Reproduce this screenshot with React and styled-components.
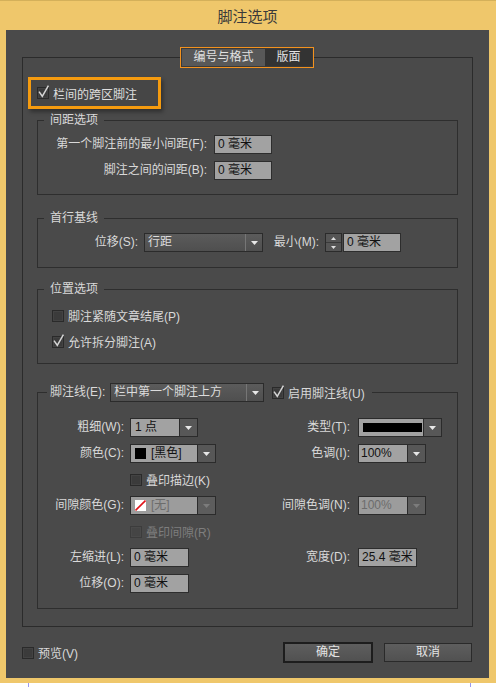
import React from 'react';
import styled, { createGlobalStyle } from 'styled-components';

const Global = createGlobalStyle`
  html, body { margin: 0; padding: 0; background: #ffffff; }
  body {
    font-family: "Liberation Sans", "Noto Sans CJK SC", sans-serif;
    font-size: 12px;
  }
  * { box-sizing: border-box; }
`;

const Window = styled.div`
  width: 496px;
  height: 683px;
  background: #efc76b;
  border-top: 1px solid #d4b05a;
  display: flex;
  flex-direction: column;
`;

const TitleBar = styled.div`
  height: 29px;
  display: flex;
  align-items: center;
  justify-content: center;
  font-family: "Noto Sans CJK SC", sans-serif;
  font-size: 15px;
  color: #3a3a3a;
  padding-right: 1px;
`;

const Panel = styled.div`
  margin: 0 7px 0 6px;
  background: #4a4a4a;
  padding: 17px 16px 15px 16px;
  color: #d9d9d9;
`;

const PageBehind = styled.div`
  height: 4px;
  margin: 0 25px 0 28px;
  border-left: 1px solid #9a9af0;
  border-right: 1px solid #9a9af0;
`;

const Fieldset = styled.fieldset`
  margin: 0;
  padding: 0;
  min-width: 0;
  border: 1px solid #2e2e2e;
`;

const OuterGroup = styled(Fieldset)`
  padding-bottom: 17px;
  border-color: #2b2b2b;
`;

const TabLegend = styled.legend`
  margin-left: 157px;
  padding: 1px;
  border: 1px solid #f3921e;
  background: #3a3a3a;
`;

const Tabs = styled.div`
  display: flex;
`;

const Tab = styled.div`
  width: ${p => p.$w}px;
  height: 17px;
  line-height: 17px;
  text-align: center;
  background: ${p => (p.$active ? '#333333' : '#585858')};
  color: #e2e2e2;
`;

const Highlight = styled.div`
  margin: 9px 0 0 5px;
  width: 133px;
  height: 32px;
  border: 3px solid #f59b0f;
  display: flex;
  align-items: center;
  gap: 4px;
  padding-left: 6px;
  background: #464646;
  box-shadow: 2px 3px 4px rgba(0, 0, 0, 0.35);
  color: #dedede;
`;

const Group = styled(Fieldset)`
  margin: ${p => p.$mt}px 14px 0;
  padding-top: ${p => p.$pt}px;
  padding-bottom: ${p => p.$pb}px;
`;

const GroupLegend = styled.legend`
  margin-left: 6px;
  padding: 0 6px;
  height: 15px;
  line-height: 15px;
  color: #d9d9d9;
`;

const SpacingGrid = styled.div`
  display: grid;
  grid-template-columns: 169px 58px;
  column-gap: 7px;
  row-gap: 7px;
  grid-auto-rows: 19px;
  align-items: center;
`;

const Label = styled.span`
  white-space: nowrap;
  text-align: right;
  line-height: 19px;
  color: ${p => (p.$disabled ? '#7e7e7e' : '#d9d9d9')};
  width: ${p => (p.$w ? `${p.$w}px` : 'auto')};
  flex-shrink: 0;
  padding-right: ${p => p.$pr || 0}px;
`;

const BaselineRow = styled.div`
  display: flex;
  align-items: center;
  height: 19px;
`;

const OptionList = styled.div`
  display: flex;
  flex-direction: column;
  gap: 7px;
  padding-left: 14px;
`;

const CheckRow = styled.div`
  display: flex;
  align-items: center;
  gap: 4px;
  height: 19px;
  white-space: nowrap;
  margin-left: ${p => p.$ml || 0}px;
  color: ${p => (p.$disabled ? '#7e7e7e' : '#d9d9d9')};
  grid-column: ${p => p.$span || 'auto'};
`;

const LineLegend = styled.legend`
  margin-left: 9px;
  padding: 0 7px 0 3px;
  height: 19px;
`;

const LegendInner = styled.div`
  display: flex;
  align-items: center;
  height: 19px;
`;

const FormGrid = styled.div`
  display: grid;
  grid-template-columns: 86px 134px 82px 1fr;
  column-gap: 6px;
  row-gap: 7px;
  grid-auto-rows: 19px;
  align-items: center;
`;

const TextField = styled.div`
  width: ${p => p.$w}px;
  height: 19px;
  background: #a2a2a2;
  border: 1px solid #2d2d2d;
  color: #111111;
  padding-left: 3px;
  line-height: 17px;
  white-space: nowrap;
  flex-shrink: 0;
  margin-left: ${p => p.$ml || 0}px;
`;

const SelectBox = styled.div`
  width: ${p => p.$w}px;
  height: 19px;
  display: flex;
  border: 1px solid #2b2b2b;
  flex-shrink: 0;
  margin-left: ${p => p.$ml || 0}px;
  background: ${p =>
    p.$dark ? 'linear-gradient(#5b5b5b, #4f4f4f)' : p.$disabled ? '#9c9c9c' : '#a2a2a2'};
`;

const SelectValue = styled.div`
  flex: 1;
  display: flex;
  align-items: center;
  gap: 5px;
  padding-left: ${p => p.$pl}px;
  line-height: 17px;
  white-space: nowrap;
  overflow: hidden;
  color: ${p => (p.$dark ? '#dcdcdc' : p.$disabled ? '#6c6c6c' : '#111111')};
`;

const SelectButton = styled.div`
  width: ${p => p.$w}px;
  display: flex;
  align-items: center;
  justify-content: center;
  background: ${p => (p.$dark ? 'transparent' : p.$disabled ? '#5d5d5d' : '#575757')};
  border-left: 1px solid ${p => (p.$dark ? '#767676' : '#2b2b2b')};
`;

const Swatch = styled.div`
  width: 11px;
  height: 11px;
  background: #000;
  flex-shrink: 0;
`;

const StrokeSwatch = styled.div`
  width: 59px;
  height: 9px;
  background: #000;
  margin-left: 4px;
`;

const Spinner = styled.div`
  width: 17px;
  height: 19px;
  margin-left: 6px;
  border: 1px solid #2b2b2b;
  background: #555555;
  display: flex;
  flex-direction: column;
  flex-shrink: 0;
`;

const SpinHalf = styled.div`
  flex: 1;
  display: flex;
  align-items: center;
  justify-content: center;
  border-top: ${p => (p.$bottom ? '1px solid #3a3a3a' : 'none')};
`;

const CheckSvg = styled.svg`
  display: block;
  overflow: visible;
  flex-shrink: 0;
`;

const FooterRow = styled.div`
  margin-top: 15px;
  height: 21px;
  display: flex;
  align-items: center;
  padding-right: 1px;
`;

const Buttons = styled.div`
  margin-left: auto;
  display: flex;
  align-items: center;
  gap: 11px;
`;

const Button = styled.button`
  width: ${p => (p.$primary ? 90 : 88)}px;
  height: ${p => (p.$primary ? 21 : 19)}px;
  border: ${p => (p.$primary ? '2px solid #1d1d1d' : '1px solid #2a2a2a')};
  background: linear-gradient(#5e5e5e, #515151);
  color: #e4e4e4;
  font: inherit;
  font-size: 12px;
  padding: 0;
  line-height: 15px;
`;

const Arrow = ({ color = '#e8e8e8', up }) => (
  <svg width="7" height="4" viewBox="0 0 7 4" style={{ display: 'block' }}>
    <path d={up ? 'M0 4H7L3.5 0Z' : 'M0 0H7L3.5 4Z'} fill={color} />
  </svg>
);

const SmallArrow = ({ up }) => (
  <svg width="5" height="3" viewBox="0 0 5 3" style={{ display: 'block' }}>
    <path d={up ? 'M0 3H5L2.5 0Z' : 'M0 0H5L2.5 3Z'} fill="#e0e0e0" />
  </svg>
);

const CheckBox = ({ checked, disabled }) => (
  <CheckSvg width="12" height="12" viewBox="0 0 12 12">
    <rect x="0.5" y="0.5" width="11" height="11" fill={disabled ? '#454545' : '#3b3b3b'} stroke={disabled ? '#3c3c3c' : '#2a2a2a'} />
    <rect x="1.5" y="1.5" width="9" height="9" fill="none" stroke={disabled ? '#4a4a4a' : '#434343'} />
    {checked && (
      <path d="M2 4.6 L5.3 9.3 L11.4 -1.4" fill="none" stroke="#d4d4d4" strokeWidth="1.5" />
    )}
  </CheckSvg>
);

const NoneSwatch = () => (
  <svg width="11" height="11" viewBox="0 0 11 11" style={{ display: 'block', flexShrink: 0 }}>
    <rect x="0" y="0" width="11" height="11" fill="#ffffff" />
    <path d="M0.5 10.5 L10.5 0.5" stroke="#e0141b" strokeWidth="1.6" />
  </svg>
);

const Select = ({ w, dark, disabled, btn = 17, pl = 3, children, ml }) => (
  <SelectBox $w={w} $dark={dark} $disabled={disabled} $ml={ml}>
    <SelectValue $dark={dark} $disabled={disabled} $pl={pl}>{children}</SelectValue>
    <SelectButton $w={btn} $dark={dark} $disabled={disabled}>
      <Arrow color={disabled ? '#7c7c7c' : '#e8e8e8'} />
    </SelectButton>
  </SelectBox>
);

export default function App() {
  return (
    <>
      <Global />
      <Window>
        <TitleBar>脚注选项</TitleBar>
        <Panel>
          <OuterGroup>
            <TabLegend>
              <Tabs>
                <Tab $w={83}>编号与格式</Tab>
                <Tab $w={47} $active>版面</Tab>
              </Tabs>
            </TabLegend>

            <Highlight>
              <CheckBox checked />
              栏间的跨区脚注
            </Highlight>

            <Group $mt={4} $pt={7} $pb={14}>
              <GroupLegend>间距选项</GroupLegend>
              <SpacingGrid>
                <Label>第一个脚注前的最小间距(F):</Label>
                <TextField $w={58}>0 毫米</TextField>
                <Label>脚注之间的间距(B):</Label>
                <TextField $w={58}>0 毫米</TextField>
              </SpacingGrid>
            </Group>

            <Group $mt={16} $pt={7} $pb={15}>
              <GroupLegend>首行基线</GroupLegend>
              <BaselineRow>
                <Label $w={100}>位移(S):</Label>
                <Select w={119} dark ml={6}>行距</Select>
                <Label $w={56}>最小(M):</Label>
                <Spinner>
                  <SpinHalf><SmallArrow up /></SpinHalf>
                  <SpinHalf $bottom><SmallArrow /></SpinHalf>
                </Spinner>
                <TextField $w={58} $ml={1}>0 毫米</TextField>
              </BaselineRow>
            </Group>

            <Group $mt={14} $pt={9} $pb={12}>
              <GroupLegend>位置选项</GroupLegend>
              <OptionList>
                <CheckRow>
                  <CheckBox />
                  脚注紧随文章结尾(P)
                </CheckRow>
                <CheckRow>
                  <CheckBox checked />
                  允许拆分脚注(A)
                </CheckRow>
              </OptionList>
            </Group>

            <Group $mt={19} $pt={16} $pb={15}>
              <LineLegend>
                <LegendInner>
                  <Label $w={56} style={{ textAlign: 'left' }}>脚注线(E):</Label>
                  <Select w={154} dark ml={4}>栏中第一个脚注上方</Select>
                  <CheckRow $ml={8}>
                    <CheckBox checked />
                    启用脚注线(U)
                  </CheckRow>
                </LegendInner>
              </LineLegend>
              <FormGrid>
                <Label>粗细(W):</Label>
                <Select w={68} btn={18} pl={4}>1 点</Select>
                <Label $pr={2}>类型(T):</Label>
                <Select w={84} btn={18} pl={0}><StrokeSwatch /></Select>

                <Label>颜色(C):</Label>
                <Select w={86} btn={18} pl={4}><Swatch />[黑色]</Select>
                <Label $pr={2}>色调(I):</Label>
                <Select w={68} btn={18} pl={2}>100%</Select>

                <CheckRow $span="2 / -1">
                  <CheckBox />
                  叠印描边(K)
                </CheckRow>

                <Label>间隙颜色(G):</Label>
                <Select w={86} btn={18} pl={4} disabled><NoneSwatch />[无]</Select>
                <Label $pr={2}>间隙色调(N):</Label>
                <Select w={68} btn={18} pl={2} disabled>100%</Select>

                <CheckRow $span="2 / -1" $disabled>
                  <CheckBox disabled />
                  叠印间隙(R)
                </CheckRow>

                <Label>左缩进(L):</Label>
                <TextField $w={59}>0 毫米</TextField>
                <Label $pr={2}>宽度(D):</Label>
                <TextField $w={59}>25.4 毫米</TextField>

                <Label>位移(O):</Label>
                <TextField $w={59}>0 毫米</TextField>
              </FormGrid>
            </Group>
          </OuterGroup>

          <FooterRow>
            <CheckRow>
              <CheckBox />
              预览(V)
            </CheckRow>
            <Buttons>
              <Button $primary>确定</Button>
              <Button>取消</Button>
            </Buttons>
          </FooterRow>
        </Panel>
      </Window>
      <PageBehind />
    </>
  );
}
